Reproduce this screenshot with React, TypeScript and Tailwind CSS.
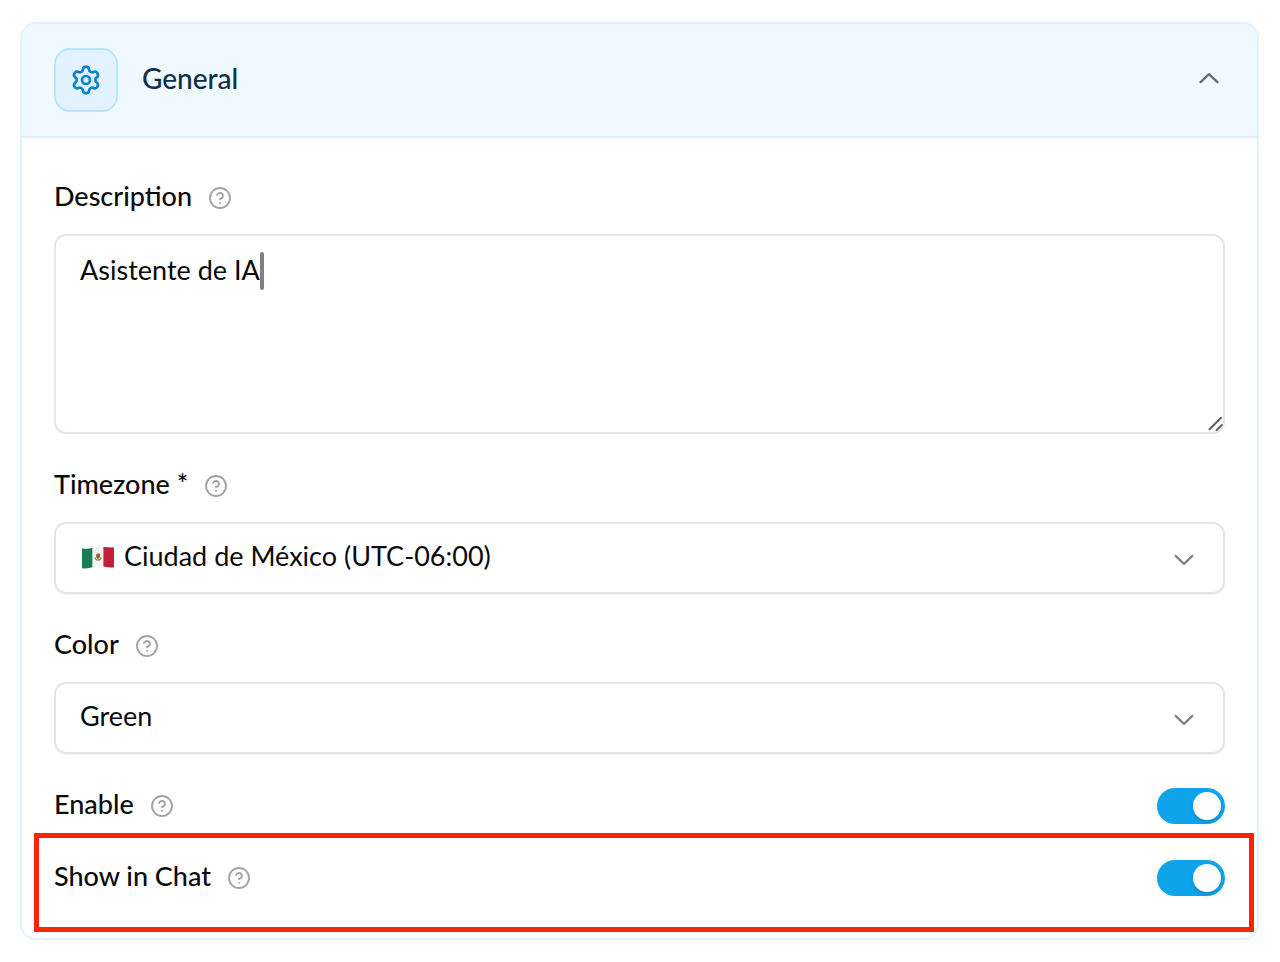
import { useState } from "react";
import type { ReactNode } from "react";
import { CircleQuestionMark, Settings } from "lucide-react";

const Chevron = ({ className = "" }: { className?: string }) => (
  <svg viewBox="0 0 32 32" className={`size-8 shrink-0 ${className}`} fill="none" stroke="currentColor" strokeWidth="2.4" strokeLinecap="round" strokeLinejoin="round" aria-hidden="true">
    <path d="M7.600 13.900 16 21.800 24.400 13.900" />
  </svg>
);

const MexicoFlag = () => (
  <svg viewBox="0 0 34 24" className="h-6 w-9 shrink-0" aria-hidden="true">
    <path d="M1 2.2C4.500 3.200 8 3 11.600 1.800V21.300C8 22.400 4.500 22.700 1 22.200Z" fill="#1c7a55" />
    <path d="M11.600 1.800C15 .9 19 .4 22.400 .9V20.400C19 20 15 20.500 11.600 21.300Z" fill="#f1f1ef" />
    <path d="M22.400 .9C26 .9 29.500 1.700 33 1.500V21.500C29.500 21.700 26 21 22.400 20.400Z" fill="#c41e3a" />
    <path d="M14.200 11.500C14.400 14.800 19.500 15 20 11.400" fill="none" stroke="#6f9468" strokeWidth="1.300" />
    <path d="M14.800 8.700 17 6.900 19.400 8.300 19 11 17 13.200 15.200 11.500Z" fill="#9a7445" />
    <path d="M16.200 9.200 18 8.700 17.600 11.200Z" fill="#5c452b" />
  </svg>
);

const FieldLabel = ({ htmlFor, children }: { htmlFor: string; children: ReactNode }) => (
  <div className="flex h-9 items-center gap-4">
    <label htmlFor={htmlFor} className="pb-1 font-medium">
      {children}
    </label>
    <button type="button" aria-label="Help" className="text-[#a5a5a8]">
      <CircleQuestionMark size={24} strokeWidth={1.9} />
    </button>
  </div>
);

type SelectFieldProps = {
  id: string;
  label: string;
  options: string[];
  icon?: ReactNode;
};

const SelectField = ({ id, label, options, icon }: SelectFieldProps) => (
  <div className="flex flex-col gap-[18px]">
    <FieldLabel htmlFor={id}>{label}</FieldLabel>
    <div className="flex h-18 items-center gap-2 rounded-xl border-2 border-[#e5e5e5] pr-[23px] pl-6 shadow-xs">
      {icon}
      <select id={id} className="min-w-0 flex-1 appearance-none bg-transparent pb-1 outline-none">
        {options.map((option) => (
          <option key={option}>{option}</option>
        ))}
      </select>
      <Chevron className="pointer-events-none text-[#858585]" />
    </div>
  </div>
);

const ToggleRow = ({ id, label }: { id: string; label: string }) => {
  const [checked, setChecked] = useState(true);

  return (
    <div className="flex items-center justify-between">
      <FieldLabel htmlFor={id}>{label}</FieldLabel>
      <input
        id={id}
        type="checkbox"
        role="switch"
        checked={checked}
        onChange={(e) => setChecked(e.target.checked)}
        className="flex h-9 w-17 cursor-pointer appearance-none items-center rounded-full bg-neutral-200 p-1 before:size-7 before:rounded-full before:bg-white before:shadow-md checked:justify-end checked:bg-[#0fa4e9]"
      />
    </div>
  );
};

const App = () => {
  return (
    <main className="bg-white py-[22px] pr-[21px] pl-5 font-['Lato',sans-serif] text-[27px] leading-9 text-neutral-950">
      <section className="rounded-2xl border-2 border-[#e0f2fe]">
        <header className="flex items-center gap-6 rounded-t-[14px] border-b-2 border-[#e0f2fe] bg-[#f0f9ff] px-8 py-6">
          <div className="flex size-16 items-center justify-center rounded-2xl border-2 border-[#b8e6fa] bg-[#e2f2fe] text-[#0784c7]">
            <Settings size={32} />
          </div>
          <h2 className="flex-1 pb-1 text-[28px] font-medium text-[#0b2f49]">General</h2>
          <button type="button" aria-label="Collapse" className="text-[#6c7073]">
            <Chevron className="rotate-180" />
          </button>
        </header>

        <form className="flex flex-col gap-[34px] px-8 py-[42px]">
          <div className="flex flex-col gap-[18px]">
            <FieldLabel htmlFor="description">Description</FieldLabel>
            <div className="relative flex">
              <textarea
                id="description"
                defaultValue="Asistente de IA"
                className="h-50 w-full resize-none rounded-xl border-2 border-[#e5e5e5] px-6 py-4 outline-none"
              />
              {/* Text cursor */}
              <span className="absolute top-[18px] left-[206px] h-[38px] w-1 rounded-xs bg-[#808080]" />
              {/* Resize grip */}
              <svg viewBox="0 0 18 18" className="absolute right-0 bottom-0 size-[18px]" fill="none" stroke="#606060" strokeWidth="2" strokeLinecap="round" aria-hidden="true">
                <path d="M2.500 13.200 14 1.800M9.700 14 14.800 9" />
              </svg>
            </div>
          </div>

          <SelectField
            id="timezone"
            label="Timezone *"
            options={["Ciudad de México (UTC-06:00)"]}
            icon={<MexicoFlag />}
          />
          <SelectField id="color" label="Color" options={["Green"]} />

          <div className="flex flex-col gap-9">
            <ToggleRow id="enable" label="Enable" />
            <div className="relative">
              <ToggleRow id="show-in-chat" label="Show in Chat" />
              {/* Highlight frame */}
              <div className="pointer-events-none absolute -top-[27px] -right-[29px] -bottom-9 -left-5 border-5 border-[#fa2507]" />
            </div>
          </div>
        </form>
      </section>
    </main>
  );
};

export default App;
